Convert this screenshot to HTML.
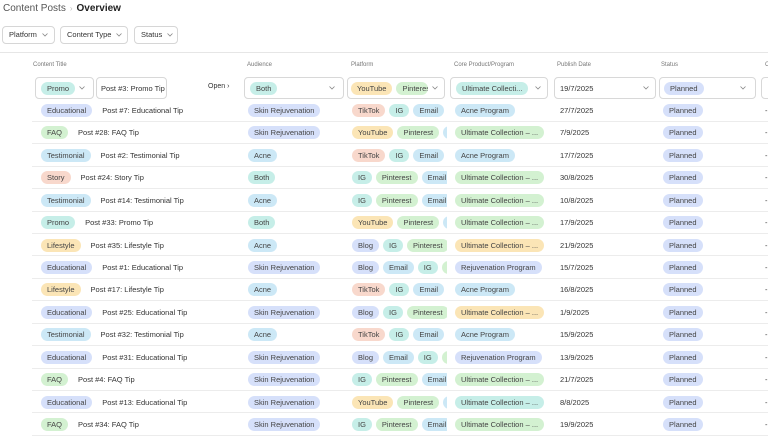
<!DOCTYPE html>
<html><head><meta charset="utf-8"><style>
*{box-sizing:border-box;margin:0;padding:0}
body{width:768px;height:434px;overflow:hidden;background:#fff;font-family:"Liberation Sans",sans-serif;color:#333;font-size:7.5px;position:relative}
.crumb{position:absolute;left:3px;top:3px;font-size:10px;color:#555;white-space:nowrap}
.crumb b{color:#222;font-weight:bold}
.crumb .sep{color:#bbb;margin:0 4px;font-size:8px}
.filt{position:absolute;top:26px;height:18px;border:1px solid #d6d6d6;border-radius:4px;font-size:7.5px;line-height:16px;padding:0 6px;color:#333;white-space:nowrap}
.chev{display:inline-block;width:6px;height:4px;vertical-align:middle;margin-left:5px}
.hline{position:absolute;left:0;right:0;top:52px;border-top:1px solid #e6e6e6}
.hd{position:absolute;top:62px;font-size:6px;color:#777;white-space:nowrap}
.chip{display:inline-block;height:13px;line-height:13px;border-radius:7px;padding:0 6px;font-size:7.5px;color:#444;white-space:nowrap;margin-right:4px;vertical-align:top}
.row{position:absolute;left:32px;right:0;height:22.4px;border-bottom:1px solid #ececec}
.c{position:absolute;top:4.5px;white-space:nowrap;overflow:hidden;height:14px}
.t{font-size:7.5px;color:#333;line-height:13px}
.teal{background:#c6eee8}.blue{background:#d6e0fa}.green{background:#d3f1d1}.lblue{background:#cce8f6}.sal{background:#f8d8cc}.yel{background:#fbe5b6}
.box{position:absolute;top:77px;height:22px;border:1px solid #d8d8d8;border-radius:4px;white-space:nowrap;overflow:hidden}
.dv{position:absolute;top:8px;width:6px;height:4px}
</style></head><body>
<svg width="0" height="0" style="position:absolute"><defs><symbol id="ch" viewBox="0 0 6 4"><path d="M0.5 0.5 L3 3 L5.5 0.5" fill="none" stroke="#888" stroke-width="0.8"/></symbol></defs></svg>
<div class="crumb">Content Posts<span class="sep">›</span><b>Overview</b></div>
<div class="filt" style="left:2px;width:53px">Platform<svg class="chev"><use href="#ch"/></svg></div>
<div class="filt" style="left:60px;width:68px">Content Type<svg class="chev"><use href="#ch"/></svg></div>
<div class="filt" style="left:134px;width:44px">Status<svg class="chev"><use href="#ch"/></svg></div>
<div class="hline"></div>
<div class="hd" style="left:33px">Content Title</div>
<div class="hd" style="left:247px">Audience</div>
<div class="hd" style="left:351px">Platform</div>
<div class="hd" style="left:454px">Core Product/Program</div>
<div class="hd" style="left:557px">Publish Date</div>
<div class="hd" style="left:661px">Status</div>
<div class="hd" style="left:765px">C</div>

<div class="box" style="left:35px;width:59px"><span class="chip teal" style="position:absolute;left:5px;top:4px">Promo</span><svg class="dv" style="left:43px"><use href="#ch"/></svg></div>
<div class="box" style="left:96px;width:71px"><span class="t" style="position:absolute;left:4px;top:4px">Post #3: Promo Tip</span></div>
<div style="position:absolute;left:208px;top:83px;font-size:7px;color:#333;white-space:nowrap">Open ›</div>
<div class="box" style="left:244px;width:100px"><span class="chip teal" style="position:absolute;left:5px;top:4px">Both</span><svg class="dv" style="left:84px"><use href="#ch"/></svg></div>
<div class="box" style="left:347px;width:98px"><span style="position:absolute;left:3px;top:4px;white-space:nowrap"><span class="chip yel">YouTube</span><span class="chip green" style="width:32px;overflow:hidden">Pinterest</span></span><svg class="dv" style="left:84px"><use href="#ch"/></svg></div>
<div class="box" style="left:450px;width:98px"><span class="chip teal" style="position:absolute;left:5px;top:4px">Ultimate Collecti...</span><svg class="dv" style="left:84px"><use href="#ch"/></svg></div>
<div class="box" style="left:554px;width:102px"><span class="t" style="position:absolute;left:5px;top:4px">19/7/2025</span><svg class="dv" style="left:88px"><use href="#ch"/></svg></div>
<div class="box" style="left:659px;width:97px"><span class="chip blue" style="position:absolute;left:4px;top:4px">Planned</span><svg class="dv" style="left:80px"><use href="#ch"/></svg></div>
<div class="box" style="left:761px;width:20px"></div>

<div id="rows"></div>
<script>
const C={Educational:'blue',FAQ:'green',Testimonial:'lblue',Story:'sal',Promo:'teal',Lifestyle:'yel',
'Skin Rejuvenation':'blue',Acne:'lblue',Both:'teal',TikTok:'sal',IG:'teal',Email:'lblue',YouTube:'yel',Pinterest:'green',Blog:'blue',
'Acne Program':'lblue','Rejuvenation Program':'blue'};
const R=[
['Educational','Post #7: Educational Tip','Skin Rejuvenation',['TikTok','IG','Email'],'Acne Program','','27/7/2025'],
['FAQ','Post #28: FAQ Tip','Skin Rejuvenation',['YouTube','Pinterest','Email'],'U','green','7/9/2025'],
['Testimonial','Post #2: Testimonial Tip','Acne',['TikTok','IG','Email'],'Acne Program','','17/7/2025'],
['Story','Post #24: Story Tip','Both',['IG','Pinterest','Email'],'U','green','30/8/2025'],
['Testimonial','Post #14: Testimonial Tip','Acne',['IG','Pinterest','Email'],'U','green','10/8/2025'],
['Promo','Post #33: Promo Tip','Both',['YouTube','Pinterest','Email'],'U','green','17/9/2025'],
['Lifestyle','Post #35: Lifestyle Tip','Acne',['Blog','IG','Pinterest'],'U','yel','21/9/2025'],
['Educational','Post #1: Educational Tip','Skin Rejuvenation',['Blog','Email','IG','Pinterest'],'Rejuvenation Program','','15/7/2025'],
['Lifestyle','Post #17: Lifestyle Tip','Acne',['TikTok','IG','Email'],'Acne Program','','16/8/2025'],
['Educational','Post #25: Educational Tip','Skin Rejuvenation',['Blog','IG','Pinterest'],'U','yel','1/9/2025'],
['Testimonial','Post #32: Testimonial Tip','Acne',['TikTok','IG','Email'],'Acne Program','','15/9/2025'],
['Educational','Post #31: Educational Tip','Skin Rejuvenation',['Blog','Email','IG','Pinterest'],'Rejuvenation Program','','13/9/2025'],
['FAQ','Post #4: FAQ Tip','Skin Rejuvenation',['IG','Pinterest','Email'],'U','green','21/7/2025'],
['Educational','Post #13: Educational Tip','Skin Rejuvenation',['YouTube','Pinterest','Email'],'U','teal','8/8/2025'],
['FAQ','Post #34: FAQ Tip','Skin Rejuvenation',['IG','Pinterest','Email'],'U','green','19/9/2025']];
let h='';
R.forEach((r,i)=>{
const top=99.5+i*22.43;
const core=r[4]=='U'?`<span class="chip ${r[5]}">Ultimate Collection – ...</span>`:`<span class="chip ${C[r[4]]}">${r[4]}</span>`;
h+=`<div class="row" style="top:${top}px">
<div class="c" style="left:9px"><span class="chip ${C[r[0]]}" style="margin-right:10px">${r[0]}</span><span class="t">${r[1]}</span></div>
<div class="c" style="left:216px"><span class="chip ${C[r[2]]}">${r[2]}</span></div>
<div class="c" style="left:320px;width:95px">${r[3].map(p=>`<span class="chip ${C[p]}">${p}</span>`).join('')}</div>
<div class="c" style="left:423px">${core}</div>
<div class="c" style="left:528px"><span class="t">${r[6]}</span></div>
<div class="c" style="left:631px"><span class="chip blue">Planned</span></div>
<div class="c" style="left:733px;color:#666"><span class="t">-</span></div></div>`;});
document.getElementById('rows').innerHTML=h;
</script>
</body></html>
